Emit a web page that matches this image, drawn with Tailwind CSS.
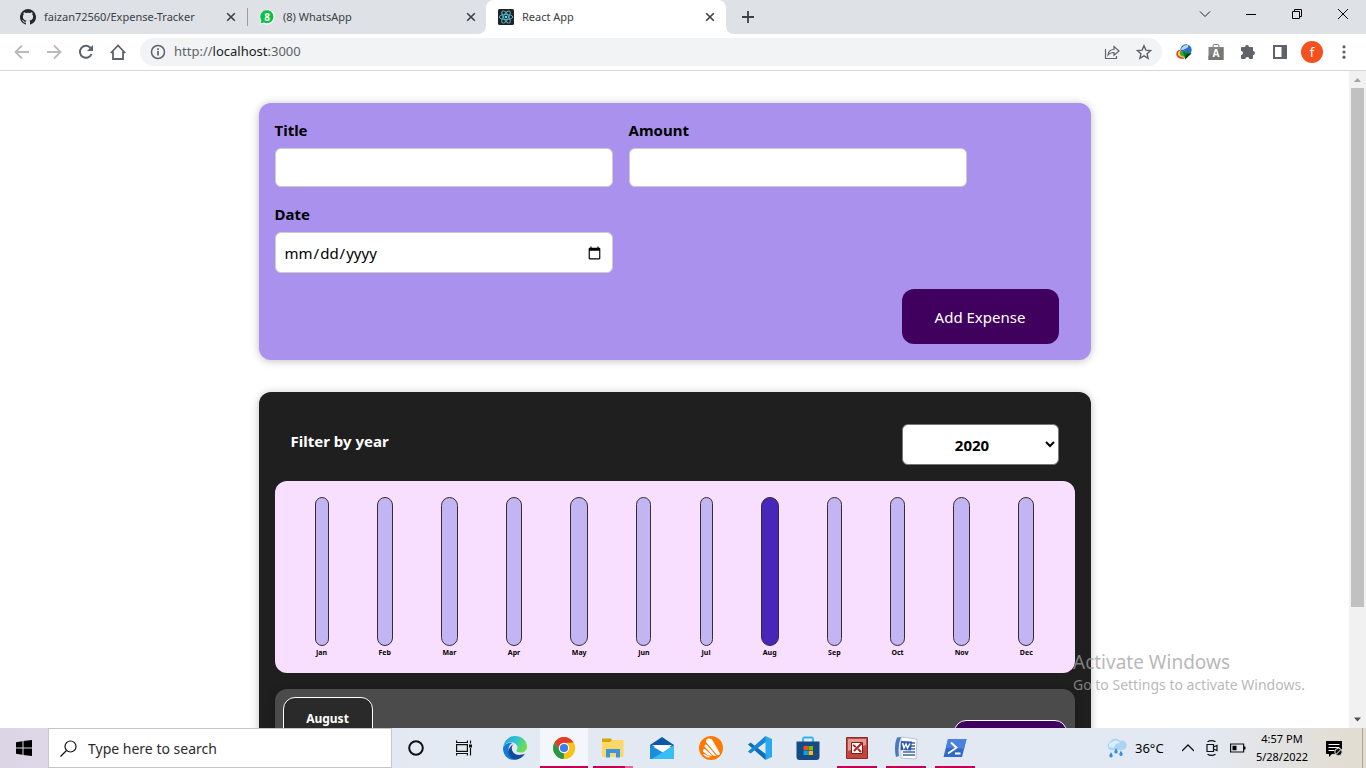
<!DOCTYPE html>
<html lang="en">
<head>
<meta charset="utf-8">
<title>React App</title>
<script src="https://cdn.jsdelivr.net/npm/@tailwindcss/browser@4"></script>
</head>
<body class="flex h-screen flex-col overflow-hidden bg-white font-['Noto_Sans','Open_Sans',sans-serif] text-black">

<!-- Tab strip -->
<header class="flex h-[34px] shrink-0 items-stretch bg-[#dee1e6] text-[11px] text-[#3c4043]">
  <div class="my-2 flex w-[248px] items-center border-r border-[#9a9da1] pr-2 pl-5">
    <svg class="size-4 shrink-0" viewBox="0 0 16 16" fill="#24292f"><path d="M8 0a8 8 0 0 0-2.500 15.600c.4.1.5-.2.5-.4v-1.500c-2.200.5-2.700-.9-2.700-.9-.4-.9-.9-1.200-.9-1.200-.7-.5.1-.5.1-.5.8.1 1.200.8 1.200.8.7 1.200 1.900.9 2.300.7.1-.5.3-.9.5-1.100-1.800-.2-3.600-.9-3.600-4 0-.9.3-1.600.8-2.100-.1-.2-.4-1 .1-2.100 0 0 .7-.2 2.200.8a7.500 7.500 0 0 1 4 0c1.500-1 2.200-.8 2.200-.8.4 1.100.2 1.900.1 2.100.5.6.8 1.300.8 2.100 0 3.100-1.900 3.800-3.700 4 .3.3.6.8.6 1.500v2.200c0 .2.1.5.5.4A8 8 0 0 0 8 0z"/></svg>
    <span class="ml-2 flex-1 whitespace-nowrap">faizan72560/Expense-Tracker</span>
    <button aria-label="Close tab" class="flex size-4 items-center justify-center"><svg class="size-2.5" viewBox="0 0 10 10" stroke="#3c4043" stroke-width="1.600"><path d="M1.200 1.200l7.600 7.600M8.800 1.200L1.200 8.800"/></svg></button>
  </div>
  <div class="flex w-[238px] items-center pr-[7px] pl-[11px]">
    <svg class="size-4 shrink-0" viewBox="0 0 16 16"><path d="M.5 15.500l1-4A7.500 7.500 0 1 1 4.700 14.700z" fill="#fff"/><path d="M1.500 14.500l.9-3A6.600 6.600 0 1 1 4.800 13.600z" fill="#0bc143"/><text x="8" y="11.500" text-anchor="middle" font-size="10" font-weight="700" fill="#fff">8</text></svg>
    <span class="ml-2 flex-1">(8) WhatsApp</span>
    <button aria-label="Close tab" class="flex size-4 items-center justify-center"><svg class="size-2.5" viewBox="0 0 10 10" stroke="#3c4043" stroke-width="1.600"><path d="M1.200 1.200l7.600 7.600M8.800 1.200L1.200 8.800"/></svg></button>
  </div>
  <div class="relative flex w-60 items-center rounded-t-lg bg-white pr-2 pl-3">
    <svg class="absolute bottom-0 -left-2 size-2" viewBox="0 0 8 8"><path d="M8 0v8H0a8 8 0 0 0 8-8z" fill="#fff"/></svg>
    <svg class="absolute -right-2 bottom-0 size-2" viewBox="0 0 8 8"><path d="M0 0v8h8a8 8 0 0 1-8-8z" fill="#fff"/></svg>
    <svg class="size-4 shrink-0" viewBox="0 0 16 16"><rect width="16" height="16" rx="1.500" fill="#222"/><g fill="none" stroke="#53b9d1" stroke-width=".9"><ellipse cx="8" cy="8" rx="6.800" ry="2.600"/><ellipse cx="8" cy="8" rx="6.800" ry="2.600" transform="rotate(60 8 8)"/><ellipse cx="8" cy="8" rx="6.800" ry="2.600" transform="rotate(120 8 8)"/></g><circle cx="8" cy="8" r="1.300" fill="#61dafb"/></svg>
    <span class="ml-2 flex-1">React App</span>
    <button aria-label="Close tab" class="flex size-4 items-center justify-center"><svg class="size-2.5" viewBox="0 0 10 10" stroke="#3c4043" stroke-width="1.600"><path d="M1.200 1.200l7.600 7.600M8.800 1.200L1.200 8.800"/></svg></button>
  </div>
  <button aria-label="New tab" class="ml-4 flex items-center"><svg class="size-3" viewBox="0 0 12 12" stroke="#3c4043" stroke-width="1.800"><path d="M6 0v12M0 6h12"/></svg></button>
  <div class="ml-auto flex items-center gap-[34px] pr-[17px] pb-1.5">
    <button aria-label="Search tabs"><svg class="block size-3" viewBox="0 0 12 12" fill="none" stroke="#222"><path d="M1 3.500l5 5 5-5"/></svg></button>
    <button aria-label="Minimize"><svg class="block size-3" viewBox="0 0 12 12" stroke="#000"><path d="M1 6.500h10"/></svg></button>
    <button aria-label="Restore"><svg class="block size-3" viewBox="0 0 12 12" fill="none" stroke="#000"><path d="M1.500 3.500h7v7h-7zM3.500 3V1.500h7v7H9"/></svg></button>
    <button aria-label="Close"><svg class="block size-3" viewBox="0 0 12 12" stroke="#000"><path d="M1 1l10 10M11 1L1 11"/></svg></button>
  </div>
</header>

<!-- Toolbar -->
<nav class="flex h-[37px] shrink-0 items-center border-b border-[#d6d6d6] bg-white px-3.5">
  <div class="flex items-center gap-4">
    <button aria-label="Back"><svg class="block size-4" viewBox="0 0 16 16" fill="none" stroke="#bababa" stroke-width="1.800"><path d="M15 8H2M8 1.500L1.500 8 8 14.500"/></svg></button>
    <button aria-label="Forward"><svg class="block size-4" viewBox="0 0 16 16" fill="none" stroke="#bababa" stroke-width="1.800"><path d="M1 8h13M8 1.500L14.500 8 8 14.500"/></svg></button>
    <button aria-label="Reload"><svg class="block size-4" viewBox="0 0 16 16" fill="none" stroke="#5f6368" stroke-width="2"><path d="M13.500 10A6 6 0 1 1 12.600 4"/><path d="M15 1v6H9z" fill="#5f6368" stroke="none"/></svg></button>
    <button aria-label="Home"><svg class="block size-4" viewBox="0 0 16 16" fill="none" stroke="#5f6368" stroke-width="1.800"><path d="M.8 9L8 1.500 15.200 9M3 7.500V15h10V7.500"/></svg></button>
  </div>
  <div class="ml-3.5 flex h-7 flex-1 items-center rounded-full bg-[#f1f3f4] px-2.5">
    <svg class="size-4" viewBox="0 0 16 16" fill="none" stroke="#5f6368" stroke-width="1.500"><circle cx="8" cy="8" r="6.500"/><path d="M8 7v4.500M8 4.300v1.600" stroke-width="1.700"/></svg>
    <span class="ml-2 flex-1 text-[13px] text-[#5f6368]">http://<span class="text-[#202124]">localhost</span>:3000</span>
    <button aria-label="Share"><svg class="block size-4" viewBox="0 0 16 16" fill="none" stroke="#5f6368" stroke-width="1.200"><path d="M1.500 5v9.500h11V12M4 11c.3-3.800 2.500-5.500 6-5.500V2.500l5 4.500-5 4.300V8.500C7 8.500 5.300 9.300 4 11z"/></svg></button>
    <button aria-label="Bookmark" class="ml-4"><svg class="block size-4" viewBox="0 0 16 16" fill="none" stroke="#5f6368" stroke-width="1.400"><path d="M8 1.800l1.900 4.300 4.700.5-3.500 3.100 1 4.600L8 11.900l-4.100 2.400 1-4.600-3.500-3.100 4.700-.5z"/></svg></button>
  </div>
  <div class="ml-3.5 flex items-center gap-4">
    <svg class="size-4" viewBox="0 0 16 16"><circle cx="10" cy="6" r="5.700" fill="#2f6fc0"/><path d="M5.500 4Q8 .5 12 1q1 2-2 3.500T5 6z" fill="#b5dbf5"/><path d="M5 5.500Q.5 6 .3 9.500T4 14.500l4 .5-1-3Q3.500 11.500 5 5.500z" fill="#e2382e"/><path d="M5 6Q1.500 7.500 1.800 10T7 13.500l.5-2Q4.500 10 5 6z" fill="#f6d32d"/><path d="M5 6.500Q3 9 4.500 11T8 12.500l-.5-4z" fill="#35a83b"/><path d="M7 8l8.500 1.200L9 15.500z" fill="#0b7a1a"/><path d="M10.500 10.500l5-1.300L9 15.500z" fill="#063f0c"/></svg>
    <svg class="size-4" viewBox="0 0 16 16"><path d="M5 3.500V2q0-1.500 1.500-1.500h3Q11 .5 11 2v1.500" fill="none" stroke="#777"/><path d="M.5 3h15v13H.5z" fill="#858585"/><path d="M.5 12l15-9v13H.5z" fill="#777"/><text x="8" y="13" text-anchor="middle" font-size="10" font-weight="700" fill="#fff">A</text></svg>
    <svg class="size-4" viewBox="0 0 16 16" fill="#5f6368"><path d="M5 3a2 2 0 0 1 4 0h3q1 0 1 1v3a2 2 0 0 1 0 4v3q0 1-1 1H9.300a2 2 0 0 0-4 0H2q-1 0-1-1v-3a2 2 0 0 0 0-4V4q0-1 1-1z"/></svg>
    <svg class="size-4" viewBox="0 0 16 16"><path d="M1 1h14v14H1zM3 3v10h6.500V3z" fill="#5f6368" fill-rule="evenodd"/></svg>
    <button class="-mx-[3px] size-[22px] rounded-full bg-[#f4511e] text-center text-[13px] leading-5 text-white">f</button>
    <button aria-label="Menu"><svg class="block size-4" viewBox="0 0 16 16" fill="#5f6368"><circle cx="8" cy="2.800" r="1.600"/><circle cx="8" cy="8" r="1.600"/><circle cx="8" cy="13.200" r="1.600"/></svg></button>
  </div>
</nav>

<!-- Page -->
<div class="relative flex min-h-0 flex-1">
  <main class="min-w-0 flex-1 overflow-hidden text-[15px]">
    <form class="mx-auto mt-8 max-w-[832px] rounded-xl bg-[#a991ed] p-4 shadow-[0_1px_8px_rgba(0,0,0,0.25)]">
      <div class="flex flex-wrap gap-4">
        <div class="w-[338px]">
          <label for="title" class="mb-2 block pt-px leading-5 font-bold">Title</label>
          <input id="title" type="text" class="block h-[39px] w-full rounded-md border border-[#ccc] bg-white px-2">
        </div>
        <div class="w-[338px]">
          <label for="amount" class="mb-2 block pt-px leading-5 font-bold">Amount</label>
          <input id="amount" type="number" class="block h-[39px] w-full rounded-md border border-[#ccc] bg-white px-2">
        </div>
        <div class="w-[338px]">
          <label for="date" class="mb-2 block pt-px leading-5 font-bold">Date</label>
          <input id="date" type="date" class="block h-[41px] w-full rounded-md border border-[#ccc] bg-white px-2 pt-0.5">
        </div>
      </div>
      <div class="mt-4 flex justify-end pr-4">
        <button type="button" class="h-[55px] w-[157px] rounded-xl bg-[#40005d] pt-0.5 text-white">Add Expense</button>
      </div>
    </form>

    <section class="mx-auto mt-8 max-w-[832px] rounded-xl bg-[#1f1f1f] p-4 shadow-[0_1px_8px_rgba(0,0,0,0.25)]">
      <div class="flex items-center justify-between p-4">
        <label for="year" class="pb-1.5 font-bold text-white">Filter by year</label>
        <select id="year" class="h-[41px] w-[157px] rounded-md border border-[#767676] bg-white pr-1 text-center font-bold">
          <option>2022</option><option>2021</option><option selected>2020</option><option>2019</option>
        </select>
      </div>

      <div class="flex h-48 justify-around rounded-xl bg-[#f8dfff] p-4 text-[7px] leading-[13px] font-bold">
        <div class="flex w-[14px] flex-col items-center"><div class="h-[149px] w-full shrink-0 rounded-xl border border-[#313131] bg-[#c3b4f3]"></div>Jan</div>
        <div class="flex w-[16px] flex-col items-center"><div class="h-[149px] w-full shrink-0 rounded-xl border border-[#313131] bg-[#c3b4f3]"></div>Feb</div>
        <div class="flex w-[17px] flex-col items-center"><div class="h-[149px] w-full shrink-0 rounded-xl border border-[#313131] bg-[#c3b4f3]"></div>Mar</div>
        <div class="flex w-[16px] flex-col items-center"><div class="h-[149px] w-full shrink-0 rounded-xl border border-[#313131] bg-[#c3b4f3]"></div>Apr</div>
        <div class="flex w-[18px] flex-col items-center"><div class="h-[149px] w-full shrink-0 rounded-xl border border-[#313131] bg-[#c3b4f3]"></div>May</div>
        <div class="flex w-[15px] flex-col items-center"><div class="h-[149px] w-full shrink-0 rounded-xl border border-[#313131] bg-[#c3b4f3]"></div>Jun</div>
        <div class="flex w-[13px] flex-col items-center"><div class="h-[149px] w-full shrink-0 rounded-xl border border-[#313131] bg-[#c3b4f3]"></div>Jul</div>
        <div class="flex w-[18px] flex-col items-center"><div class="h-[149px] w-full shrink-0 rounded-xl border border-[#313131] bg-[#4826b9]"></div>Aug</div>
        <div class="flex w-[15px] flex-col items-center"><div class="h-[149px] w-full shrink-0 rounded-xl border border-[#313131] bg-[#c3b4f3]"></div>Sep</div>
        <div class="flex w-[15px] flex-col items-center"><div class="h-[149px] w-full shrink-0 rounded-xl border border-[#313131] bg-[#c3b4f3]"></div>Oct</div>
        <div class="flex w-[17px] flex-col items-center"><div class="h-[149px] w-full shrink-0 rounded-xl border border-[#313131] bg-[#c3b4f3]"></div>Nov</div>
        <div class="flex w-[16px] flex-col items-center"><div class="h-[149px] w-full shrink-0 rounded-xl border border-[#313131] bg-[#c3b4f3]"></div>Dec</div>
      </div>

      <article class="mt-4 flex items-center justify-between rounded-xl bg-[#4b4b4b] p-2 shadow-[0_2px_8px_rgba(0,0,0,0.25)]">
        <div class="flex h-[90px] w-[90px] flex-col items-center rounded-xl border border-white bg-[#2a2a2a] pt-3 text-xs font-bold text-white"><span class="leading-[18px]">August</span></div>
        <div class="h-11 w-[113px] rounded-xl border border-white bg-[#40005d]"></div>
      </article>
    </section>
  </main>

  <!-- Scrollbar -->
  <div class="flex w-[17px] shrink-0 flex-col items-center bg-[#f1f1f1]">
    <svg class="h-[17px] w-[17px] shrink-0" viewBox="0 0 17 17"><path d="M5 11h7L8.500 7z" fill="#a3a3a3"/></svg>
    <div class="h-[519px] w-[13px] bg-[#c1c1c1]"></div>
    <svg class="mt-auto h-[17px] w-[17px] shrink-0" viewBox="0 0 17 17"><path d="M5 6.500h7l-3.500 4z" fill="#505050"/></svg>
  </div>

  <!-- Activation watermark -->
  <div class="pointer-events-none absolute right-[57px] bottom-[33px] w-[236px] whitespace-nowrap text-[#a0a0a0]/75">
    <p class="text-[19px] leading-[26px]">Activate Windows</p>
    <p class="text-sm leading-5">Go to Settings to activate Windows.</p>
  </div>
</div>

<!-- Taskbar -->
<footer class="relative flex h-10 shrink-0 items-stretch bg-linear-to-r from-[#dcd5e6] via-[#e3eaf4] via-30% to-[#e3e8f2]">
  <div class="absolute inset-y-0 right-0 w-40 bg-linear-to-r from-transparent to-[#e2dccf]"></div>
  <button aria-label="Start" class="flex w-12 items-center justify-center"><svg class="size-4" viewBox="0 0 16 16"><path d="M0 2.200L6.500 1.300v6.200H0zM7.500 1.100L16 0v7.500H7.500zM0 8.500h6.500v6.200L0 13.800zM7.500 8.500H16V16l-8.500-1.100z"/></svg></button>
  <label class="flex w-[344px] items-center border border-[#c5c7cb] bg-white pl-[11px]">
    <svg class="size-[17px]" viewBox="0 0 17 17" fill="none" stroke="#111" stroke-width="1.200"><circle cx="10.500" cy="6.500" r="5.500"/><path d="M6.500 10.500L.5 16.500"/></svg>
    <input type="text" aria-label="Search" placeholder="Type here to search" class="ml-[11px] w-64 bg-transparent pt-0.5 text-sm outline-none placeholder:text-[#2b2b2b]">
  </label>
  <button aria-label="Cortana" class="flex w-12 items-center justify-center"><svg class="size-4" viewBox="0 0 16 16"><circle cx="8" cy="8" r="6.800" fill="none" stroke="#111" stroke-width="2"/></svg></button>
  <button aria-label="Task view" class="flex w-12 items-center justify-center"><svg class="size-4" viewBox="0 0 16 16" fill="none" stroke="#111" stroke-width="1.200"><path d="M.6.500v2h10.800v-2M.6 15.500v-2h10.800v2M.6 4.600h10.800v6.800H.6zM14.500.500v3M14.500 8v7.500"/><path d="M13 4.500h3v3h-3z" fill="#111" stroke="none"/></svg></button>

  <button aria-label="Edge" class="ml-[3px] flex w-12 items-center justify-center"><svg class="size-6" viewBox="0 0 24 24"><defs><linearGradient id="eg" x1="0" y1="0" x2="1" y2=".4"><stop offset="0" stop-color="#1b9de2"/><stop offset=".55" stop-color="#2fc3d2"/><stop offset="1" stop-color="#6ae04d"/></linearGradient></defs><path d="M0 12C1 4.500 6 0 12 0c7 0 12 5 12 10.500 0 4-3 6-6.500 6-2.800 0-4.500-1-4-2 1.500-2 1.500-5-1.500-7C8 5 2 6.500 0 12z" fill="url(#eg)"/><path d="M0 12c1.500-4.500 6-6 9.500-5-3.500 1.500-4.500 5-3.500 8.500C7 19.500 11 22 16 22.500 8 26.500 0 21 0 12z" fill="#1279d4"/><path d="M11 8C8.500 9.500 8 13 10 16s7 4 12 1.500C19.500 22 15 24 11 23.500 5 21 2.500 12 11 8z" fill="#124b9d"/></svg></button>
  <button aria-label="Chrome" class="ml-px flex w-12 items-center justify-center border-b-2 border-[#c30052] bg-[#f3f6fa] pt-0.5"><svg class="size-[22px]" viewBox="0 0 22 22"><circle cx="11" cy="11" r="11" fill="#fbc116"/><path d="M1.500 5.500A11 11 0 0 1 20.500 5.500L11 6 6.700 13.500z" fill="#e33b2e"/><path d="M1.500 5.500L6.700 13.500 11 16l-.3 6A11 11 0 0 1 1.500 5.500z" fill="#279847"/><path d="M11 6h9.800A11 11 0 0 1 10.700 22l4.600-8.500z" fill="#fbc116"/><circle cx="11" cy="11" r="5.200" fill="#fff"/><circle cx="11" cy="11" r="4.100" fill="#3b7ded"/></svg></button>
  <button aria-label="File Explorer" class="ml-[5px] flex w-10 flex-col items-center justify-between pt-2"><svg class="h-6 w-6" viewBox="0 0 24 24"><path d="M1 2.500h9l1.500 2.500H22v16H1z" fill="#d9a300"/><path d="M1 6h8l2-2h11.500v17H1z" fill="#ffd767"/><path d="M5 13h14v8.500h-4V17H9v4.500H5z" fill="#3a96dd"/></svg><span class="flex h-0.5 w-full"><span class="flex-1 bg-[#c30052]"></span><span class="w-2 bg-[#e0659a]"></span></span></button>
  <button aria-label="Mail" class="ml-[9px] flex w-10 items-center justify-center"><svg class="size-6" viewBox="0 0 24 24"><path d="M0 9L12 1l12 8v2H0z" fill="#0a5aa8"/><path d="M2 9h20l-9 8z" fill="#fff"/><path d="M0 9l13 7.500L6 23H0z" fill="#1b8fdb"/><path d="M24 9v14H2l11-7z" fill="#35bff2"/></svg></button>
  <button aria-label="Avast" class="ml-[9px] flex w-10 items-center justify-center"><svg class="size-6" viewBox="0 0 24 24"><circle cx="12" cy="12" r="12" fill="#ff7800"/><path d="M7 6Q6.500 3 9.500 2.500 13 2 14.500 6L20.500 16.500Q21.500 19.500 18 19z" fill="#fff"/><path d="M5.500 10.500Q5.300 8 7.500 8.500L17 19.500q-1.500 1.500-4-1z" fill="#fff"/><path d="M4 15.500q-.5-3 2-2.500l7 6.500q-2 .8-5-.8z" fill="#fff"/><path d="M4 18.500q1-1 3 .5l5 2q-4 1.500-8-2.500z" fill="#fff"/></svg></button>
  <button aria-label="Visual Studio Code" class="ml-[9px] flex w-10 items-center justify-center"><svg class="size-6" viewBox="0 0 24 24"><path d="M0 8.500L2.500 6.500 19 19l-1.500 5z" fill="#0a6fb8"/><path d="M0 15.500L2.500 17.500 19 5 17.500 0z" fill="#1488d2"/><path d="M17.500 0L24 3v18l-6.500 3z" fill="#2aa9f2"/></svg></button>
  <button aria-label="Microsoft Store" class="ml-2 flex w-10 items-center justify-center"><svg class="size-6" viewBox="0 0 24 24"><path d="M7 6V3q0-1.500 1.500-1.500h7Q17 1.500 17 3v3" fill="none" stroke="#2fb4ef" stroke-width="1.800"/><path d="M.5 5.500h23V21q0 3-3 3h-17q-3 0-3-3z" fill="#174a83"/><path d="M7.500 10H12v4.200H7.500z" fill="#f25022"/><path d="M12.500 10H17v4.200h-4.500z" fill="#7fba00"/><path d="M7.500 14.800H12V19H7.500z" fill="#00a4ef"/><path d="M12.500 14.800H17V19h-4.500z" fill="#ffb900"/></svg></button>
  <button aria-label="Picture Manager" class="ml-[9px] flex w-10 items-center justify-center border-b-2 border-[#c30052] pt-0.5"><svg class="size-[22px]" viewBox="0 0 22 22"><path d="M.5.500h21v21H.5z" fill="#c4453d" stroke="#8d2a26"/><path d="M2 2h18v6L2 14z" fill="#de9a93"/><path d="M5.500 5.500h11v11h-11z" fill="#fff" stroke="#7f1d1b"/><path d="M8 14l8-8M7 8l3 2M12 12l3 3" fill="none" stroke="#b3201c" stroke-width="2"/></svg></button>
  <button aria-label="Word" class="ml-[9px] flex w-10 items-center justify-center border-b-2 border-[#c30052] pt-0.5"><svg class="size-6" viewBox="0 0 24 24"><path d="M7 1l16 2-1 20-15-1z" fill="#fff" stroke="#b9c4da"/><path d="M17 7h4M17 10h4M16 13h5M9 16h12M9 19h12" stroke="#3d62a8" stroke-width="1.300"/><path d="M3 1.500L7 1Q3.500 9 5 20l-3 1Q-.5 10 3 1.500z" fill="#4a79b8"/><path d="M7 5l11 .5-1 9L6.500 14z" fill="#2a5bab"/><path d="M8.500 7l1.500 5 2-4 1.500 4L16 7.500" fill="none" stroke="#fff" stroke-width="1.500"/></svg></button>
  <button aria-label="PowerShell" class="ml-[9px] flex w-10 items-center justify-center border-b-2 border-[#c30052] pt-0.5"><svg class="size-6" viewBox="0 0 24 24"><path d="M5 3h18.500L19 21H.5z" fill="#2f69c9"/><path d="M5 3h18.500L21 13Q10 11 3 12z" fill="#4c82db"/><path d="M8 6.500l5.500 5.200L5 17.500M12 17.500h5.500" fill="none" stroke="#fff" stroke-width="1.900"/></svg></button>

  <div class="relative ml-auto flex items-center text-[13px]">
    <svg class="size-[22px]" viewBox="0 0 22 22"><path d="M5 13a4.500 4.500 0 0 1 0-8 6 6 0 0 1 10-1 4.700 4.700 0 1 1 2 9z" fill="#a9d4f4"/><path d="M4 10a4 4 0 0 1 3-5 5 5 0 0 1 8 1q-5 0-6 5z" fill="#d9eefb"/><path d="M6 15l1.500 3a1.700 1.700 0 1 1-3 0zM11 11l1.500 3a1.700 1.700 0 1 1-3 0zM16 13.500l1.500 3a1.700 1.700 0 1 1-3 0z" fill="#2f8fe6"/></svg>
    <span class="ml-2 w-[31px] pt-0.5 whitespace-nowrap">36°C</span>
    <svg class="ml-4 size-3" viewBox="0 0 12 12" fill="none" stroke="#111" stroke-width="1.300"><path d="M0 9l6-6 6 6"/></svg>
    <svg class="ml-3 h-4 w-3" viewBox="0 0 12 16" fill="none" stroke="#111" stroke-width="1.200"><path d="M1 4.500h6.500v7H1zM7.500 7l3.500-1.500v5L7.500 9M1.500 1.800Q5.500-.6 9.500 1.800M1.500 14.200q4 2.400 8 0"/></svg>
    <svg class="ml-3 h-3 w-4" viewBox="0 0 16 12"><path d="M.6 2h13v8H.6z" fill="none" stroke="#111" stroke-width="1.200"/><path d="M2.500 3.800h4v4.400h-4zM14 4.500h1.500v3H14z"/></svg>
    <div class="ml-2 w-14 text-center text-[11px] leading-[18px] whitespace-nowrap"><div>4:57 PM</div><div>5/28/2022</div></div>
    <svg class="ml-4 size-[17px]" viewBox="0 0 17 17"><path d="M0 1h16v13H6l-3 3v-3H0z"/><path d="M2.500 4.500h11M2.500 7.500h11M2.500 10.500h6" stroke="#fff"/><circle cx="12.500" cy="12" r="3.700" fill="#111" stroke="#e3e2df"/><path d="M10 14.500l5-5" stroke="#fff"/></svg>
    <div class="ml-[19px] h-10 w-1 border-l border-[#aaa79f]"></div>
  </div>
</footer>
</body>
</html>
